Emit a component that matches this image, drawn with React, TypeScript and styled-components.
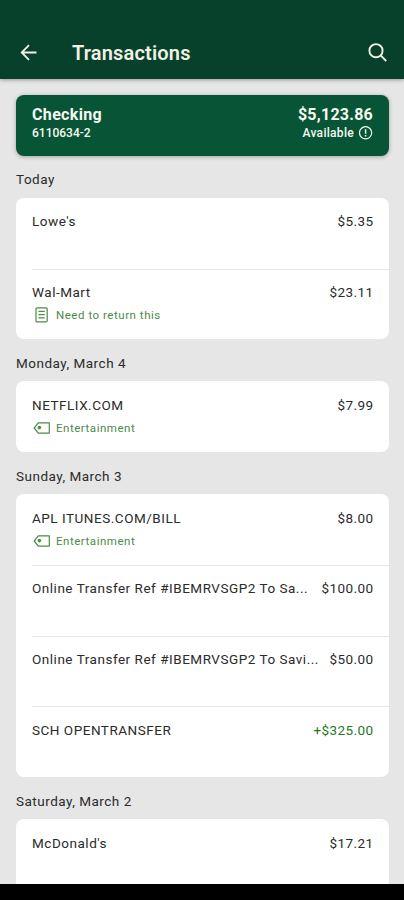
import React from 'react';
import styled, { createGlobalStyle } from 'styled-components';

const GlobalStyle = createGlobalStyle`
  * { box-sizing: border-box; }
  body {
    margin: 0;
    background: #e6e6e6;
    font-family: Roboto, "Liberation Sans", sans-serif;
    color: #2b2b2b;
  }
`;

const Screen = styled.div`
  display: flex;
  flex-direction: column;
  width: 404px;
  height: 900px;
  overflow: hidden;
  background: #e6e6e6;
`;

const AppBar = styled.header`
  flex: none;
  display: flex;
  align-items: center;
  height: 79px;
  padding: 26px 15px 0 18px;
  background: #07412b;
  color: #f1f1e4;
  box-shadow: 0 1px 4px rgba(0, 0, 0, 0.35);
`;

const Title = styled.h1`
  flex: 1;
  margin: 0 0 0 32px;
  font-size: 20px;
  line-height: 24px;
  font-weight: 600;
  letter-spacing: 0.18px;
`;

const IconButton = styled.button`
  display: flex;
  padding: 0;
  border: 0;
  background: none;
  color: inherit;
`;

const Content = styled.main`
  flex: 1;
  min-height: 0;
  overflow: hidden;
  padding: 16px 15px 0 16px;
`;

const AccountCard = styled.section`
  display: flex;
  justify-content: space-between;
  height: 61px;
  padding: 11px 16px 0;
  border-radius: 8px;
  background: #075536;
  color: #f6faf0;
  box-shadow: 0 1px 4px rgba(0, 0, 0, 0.3);
`;

const AccountSide = styled.div<{ $end?: boolean }>`
  display: flex;
  flex-direction: column;
  align-items: ${(p) => (p.$end ? 'flex-end' : 'flex-start')};
`;

const AccountMain = styled.div<{ $spacing: number }>`
  font-size: 16px;
  line-height: 18px;
  font-weight: 700;
  letter-spacing: ${(p) => p.$spacing}px;
`;

const AccountSub = styled.div<{ $spacing: number }>`
  display: flex;
  align-items: center;
  gap: 5px;
  font-size: 12px;
  line-height: 18px;
  font-weight: 500;
  letter-spacing: ${(p) => p.$spacing}px;
`;

const DayLabel = styled.h2`
  margin: 0;
  height: 41.8px;
  padding-top: 15.4px;
  font-size: 13.5px;
  line-height: 16px;
  font-weight: 400;
  letter-spacing: 0.5px;
`;

const DayCard = styled.ul`
  margin: 0;
  padding: 0 0 0 16px;
  list-style: none;
  border-radius: 8px;
  background: #fff;
`;

const Row = styled.li`
  height: 70.85px;
  padding: 15.7px 15.5px 0 0;
  & + & {
    padding-top: 14.7px;
    border-top: 1.5px solid #e6e6e6;
  }
`;

const RowLine = styled.div`
  display: flex;
  justify-content: space-between;
  gap: 10px;
  font-size: 13.5px;
  line-height: 16px;
`;

const Payee = styled.span`
  min-width: 0;
  white-space: nowrap;
  letter-spacing: 0.52px;
`;

const Amount = styled.span<{ $credit?: boolean }>`
  flex: none;
  letter-spacing: 0.4px;
  color: ${(p) => (p.$credit ? '#25781f' : 'inherit')};
`;

const Note = styled.div`
  display: flex;
  align-items: center;
  gap: 5px;
  margin-top: 7px;
  font-size: 11.5px;
  line-height: 16px;
  letter-spacing: 0.53px;
  color: #4b8c47;
`;

const SystemBar = styled.footer`
  flex: none;
  height: 16px;
  background: #000;
`;

const BackIcon = () => (
  <svg width="22" height="22" viewBox="0 0 22 22" fill="none" stroke="currentColor" strokeWidth="1.8">
    <path d="M18.5 10.5H4M11 3.2L3.7 10.5L11 17.8" />
  </svg>
);

const SearchIcon = () => (
  <svg width="22" height="22" viewBox="0 0 22 22" fill="none" stroke="currentColor" strokeWidth="1.9">
    <circle cx="9" cy="8.7" r="6.6" />
    <path d="M13.6 13.4L19.2 19" />
  </svg>
);

const InfoIcon = () => (
  <svg width="14" height="15" viewBox="0 0 14 15" fill="none" stroke="currentColor" strokeWidth="1.2">
    <circle cx="6.6" cy="6.8" r="6.1" />
    <path d="M6.6 3.3V7.8M6.6 9V10.4" strokeWidth="1.5" />
  </svg>
);

const MemoIcon = () => (
  <svg width="19" height="16" viewBox="0 0 19 16" fill="none" stroke="currentColor" strokeWidth="1.2">
    <rect x="4" y="0.9" width="11.2" height="14" rx="1.2" />
    <path d="M6.5 4.4H12.7M6.5 7.6H12.7M6.5 10.8H12.7" />
  </svg>
);

const TagIcon = () => (
  <svg width="19" height="16" viewBox="0 0 19 16" fill="none" stroke="currentColor" strokeWidth="1.2">
    <path d="M6.3 2.9H17.3V13.1H6.3L2.2 8Z" strokeLinejoin="round" />
    <circle cx="7.4" cy="7.6" r="1.8" fill="currentColor" stroke="none" />
  </svg>
);

type Transaction = {
  payee: string;
  amount: string;
  credit?: boolean;
  note?: string;
  icon?: 'memo' | 'tag';
};

const days: { label: string; items: Transaction[] }[] = [
  {
    label: 'Today',
    items: [
      { payee: 'Lowe\'s', amount: '$5.35' },
      { payee: 'Wal-Mart', amount: '$23.11', note: 'Need to return this', icon: 'memo' },
    ],
  },
  {
    label: 'Monday, March 4',
    items: [{ payee: 'NETFLIX.COM', amount: '$7.99', note: 'Entertainment', icon: 'tag' }],
  },
  {
    label: 'Sunday, March 3',
    items: [
      { payee: 'APL ITUNES.COM/BILL', amount: '$8.00', note: 'Entertainment', icon: 'tag' },
      { payee: 'Online Transfer Ref #IBEMRVSGP2 To Sa...', amount: '$100.00' },
      { payee: 'Online Transfer Ref #IBEMRVSGP2 To Savi...', amount: '$50.00' },
      { payee: 'SCH OPENTRANSFER', amount: '+$325.00', credit: true },
    ],
  },
  { label: 'Saturday, March 2', items: [{ payee: 'McDonald\'s', amount: '$17.21' }] },
];

export default function App() {
  return (
    <>
      <GlobalStyle />
      <Screen>
        <AppBar>
          <IconButton aria-label="Back"><BackIcon /></IconButton>
          <Title>Transactions</Title>
          <IconButton aria-label="Search"><SearchIcon /></IconButton>
        </AppBar>
        <Content>
          <AccountCard>
            <AccountSide>
              <AccountMain $spacing={0.35}>Checking</AccountMain>
              <AccountSub $spacing={0}>6110634-2</AccountSub>
            </AccountSide>
            <AccountSide $end>
              <AccountMain $spacing={0.25}>$5,123.86</AccountMain>
              <AccountSub $spacing={0.3}>Available <InfoIcon /></AccountSub>
            </AccountSide>
          </AccountCard>
          {days.map((day) => (
            <section key={day.label}>
              <DayLabel>{day.label}</DayLabel>
              <DayCard>
                {day.items.map((item, i) => (
                  <Row key={i}>
                    <RowLine>
                      <Payee>{item.payee}</Payee>
                      <Amount $credit={item.credit}>{item.amount}</Amount>
                    </RowLine>
                    {item.note && (
                      <Note>
                        {item.icon === 'memo' ? <MemoIcon /> : <TagIcon />}
                        {item.note}
                      </Note>
                    )}
                  </Row>
                ))}
              </DayCard>
            </section>
          ))}
        </Content>
        <SystemBar />
      </Screen>
    </>
  );
}
